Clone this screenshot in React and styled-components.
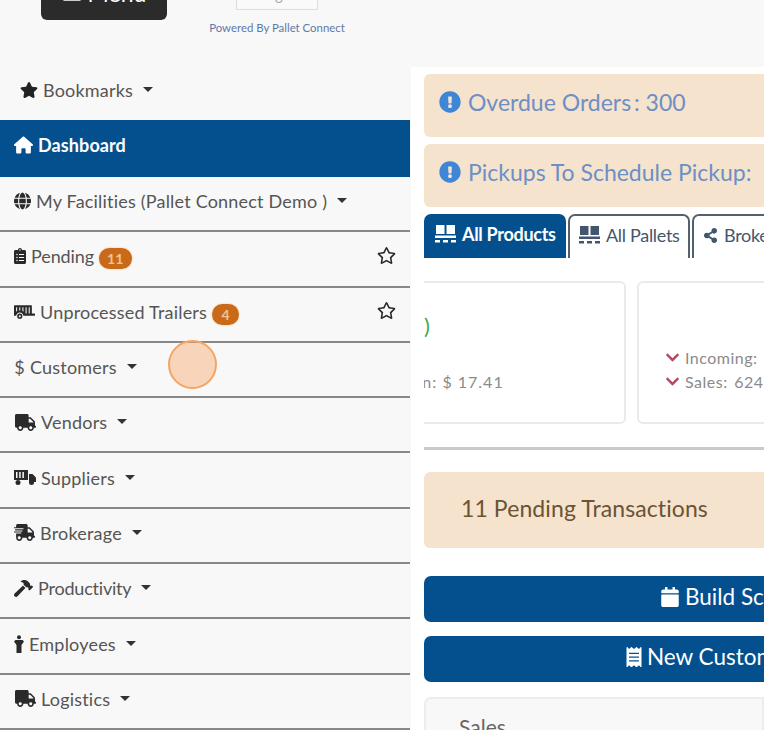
import styled, { createGlobalStyle } from "styled-components";
import {
    FaStar, FaRegStar, FaGlobe, FaClipboardList, FaTrailer, FaTruck,
    FaShippingFast, FaHammer, FaExclamationCircle, FaShareAlt,
    FaCalendar, FaReceipt, FaChevronDown, FaBars,
} from "react-icons/fa";
import { FaHouse } from "react-icons/fa6";

const GlobalStyle = createGlobalStyle`
    html, body {
        margin: 0;
        height: 730px;
        overflow: hidden;
        background: #f8f8f8;
        font-family: Lato, "Liberation Sans", sans-serif;
    }
`

const Page = styled.div`
    position: relative;
    width: 764px;
    height: 730px;
    overflow: hidden;
    color: #555;
`

const TopBar = styled.header`
    display: flex;
    height: 67px;
    padding-left: 41px;
    gap: 40px;
`

const MenuButton = styled.button`
    display: flex;
    align-items: center;
    justify-content: center;
    gap: 6px;
    width: 126px;
    height: 44px;
    margin-top: -24px;
    padding: 0 0 11px;
    border: 0;
    border-radius: 6px;
    background: #2b2b2b;
    color: #fff;
    font: 400 23px Lato, sans-serif;
`

const Brand = styled.div`
    display: flex;
    flex-direction: column;
    align-items: center;
    width: 140px;
`

const LogoBox = styled.div`
    width: 80px;
    height: 30px;
    margin-top: -22px;
    border: 1px solid #ddd;
    background: #fafafa;
    color: #aaa;
    font-size: 15px;
    letter-spacing: 1px;
    line-height: 30px;
    text-align: center;
    overflow: hidden;
`

const Powered = styled.div`
    margin-top: 11px;
    color: #5f78a8;
    font-size: 11.4px;
    white-space: nowrap;
`

const Body = styled.div`
    display: flex;
    align-items: flex-start;
`

const Sidebar = styled.nav`
    flex: none;
    width: 410px;
`

const BookmarkRow = styled.div`
    box-sizing: border-box;
    display: flex;
    align-items: center;
    gap: 5px;
    height: 53px;
    padding: 0 0 8px 20px;
    font-size: 18px;
    letter-spacing: 0.2px;
    color: #555;
    svg { color: #222; }
`

const Row = styled.div`
    box-sizing: border-box;
    display: flex;
    align-items: center;
    gap: 5px;
    height: 55.3px;
    padding: 0 14px 5px;
    border-bottom: 2px solid #888;
    font-size: 18px;
    letter-spacing: 0.2px;
    color: #555;
    svg { color: #2a2a2a; }
`

const ActiveRow = styled(Row)`
    height: 57px;
    padding-bottom: 8px;
    border-bottom: 0;
    background: #04508f;
    color: #fff;
    font-weight: 700;
    letter-spacing: 0.1px;
    svg { color: #fff; }
`

// icon widths differ, so each one sits in a slot of its own width
const IconSlot = styled.span`
    flex: none;
    display: flex;
    justify-content: center;
    width: ${(props) => props.$width}px;
`

const Label = styled.span`
    letter-spacing: ${(props) => props.$spacing ?? 0.2}px;
`

const Caret = styled.span`
    width: 0;
    height: 0;
    margin-left: 5px;
    margin-top: -1px;
    border-left: 5.5px solid transparent;
    border-right: 5.5px solid transparent;
    border-top: 5px solid #333;
`

const Badge = styled.span`
    box-sizing: border-box;
    min-width: 27px;
    height: 21px;
    margin-top: 5px;
    padding: 0 8px;
    border-radius: 11px;
    background: #c96a1b;
    box-shadow: 0 0 2px #f5b46f;
    color: #f3c28f;
    font-size: 14px;
    font-weight: 700;
    line-height: 21px;
    text-align: center;
`

const FavStar = styled(FaRegStar)`
    margin-left: auto;
    margin-top: -2px;
`

const Main = styled.main`
    flex: 1;
    min-width: 0;
    margin-left: 1px;
    padding: 7px 0 0 13px;
    background: #fff;
    overflow: hidden;
`

const Alert = styled.div`
    box-sizing: border-box;
    display: flex;
    align-items: center;
    gap: 7px;
    height: 63px;
    margin-bottom: 7px;
    padding: 0 0 8px 15px;
    border-radius: 6px 0 0 6px;
    background: #f5e3cd;
    color: #6d8fc4;
    font-size: 23px;
    white-space: nowrap;
    svg { color: #3f86d6; flex: none; }
`

const Tabs = styled.div`
    display: flex;
    gap: 2px;
    height: 44px;
    white-space: nowrap;
`

const Tab = styled.div`
    box-sizing: border-box;
    display: flex;
    align-items: center;
    gap: 6px;
    flex: none;
    width: ${(props) => props.$width}px;
    padding: 0 0 4px 9px;
    border-radius: 7px 7px 0 0;
    border: 2px solid #54606c;
    border-bottom: 0;
    background: #fff;
    color: #44566e;
    font-size: 18px;
    letter-spacing: -0.3px;
`

const ActiveTab = styled(Tab)`
    padding-left: 11px;
    border: 0;
    background: #04508f;
    color: #fff;
    font-weight: 700;
`

const Cards = styled.div`
    display: flex;
    gap: 11px;
    margin-top: 23px;
    overflow: hidden;
`

const Card = styled.div`
    box-sizing: border-box;
    flex: none;
    width: 300px;
    height: 143px;
    border: 2px solid #eaeaea;
    border-radius: 6px;
    background: #fff;
    color: #8a8a8a;
    font-size: 16px;
`

const FirstCard = styled(Card)`
    margin-left: -98px;
    padding: 31px 0 0 49px;
`

const SecondCard = styled(Card)`
    padding: 62px 0 0 26px;
`

const Paren = styled.div`
    padding-left: 47px;
    color: #4aa64a;
    font-size: 22px;
    line-height: 24px;
`

const MarginText = styled.div`
    margin-top: 34px;
    letter-spacing: 1px;
    white-space: nowrap;
`

const Stat = styled.div`
    display: flex;
    align-items: center;
    gap: 5px;
    height: 24px;
    letter-spacing: 0.5px;
    word-spacing: 2px;
    white-space: nowrap;
    svg { color: #b5475f; }
`

const Scrollbar = styled.div`
    height: 3px;
    margin-top: 23px;
    background: #c9c9c9;
`

const PendingAlert = styled(Alert)`
    height: 76px;
    margin: 22px 0 28px;
    padding: 0 0 4px 37px;
    color: #6b5335;
    letter-spacing: 0.1px;
`

const ActionButton = styled.div`
    box-sizing: border-box;
    display: flex;
    align-items: center;
    gap: ${(props) => props.$gap}px;
    width: 540px;
    height: 46px;
    margin-bottom: 14px;
    padding: 0 0 5px ${(props) => props.$pad}px;
    border-radius: 7px 0 0 7px;
    background: #04508f;
    color: #fff;
    font-size: 22.5px;
    white-space: nowrap;
`

const SalesCard = styled.div`
    box-sizing: border-box;
    height: 80px;
    margin-top: 15px;
    padding: 15px 0 0 33px;
    border: 2px solid #ececec;
    border-radius: 7px 0 0 0;
    background: #f8f8f8;
    color: #666;
    font-size: 21px;
`

const ClickMarker = styled.div`
    position: absolute;
    left: 168px;
    top: 340px;
    box-sizing: border-box;
    width: 49px;
    height: 49px;
    border: 2px solid #f5a563;
    border-radius: 50%;
    background: rgba(247, 165, 100, 0.42);
`

function PalletIcon() {
    return (
        <svg width="21" height="20" viewBox="0 0 21 20" fill="currentColor">
            <rect x="1" y="1" width="8.5" height="9" />
            <rect x="11.5" y="1" width="8.5" height="9" />
            <rect x="0" y="11.5" width="21" height="2.5" />
            <rect x="0" y="16" width="5" height="2.5" />
            <rect x="8" y="16" width="5" height="2.5" />
            <rect x="16" y="16" width="5" height="2.5" />
        </svg>
    );
}

function PersonIcon() {
    return (
        <svg width="10" height="18" viewBox="0 0 10 18" fill="currentColor">
            <circle cx="5" cy="2.2" r="2" />
            <path d="M1.5 5h7L10 6.5 7.5 10v8h-5v-8L0 6.5z" />
        </svg>
    );
}

function SupplierIcon() {
    return (
        <svg width="22" height="17" viewBox="0 0 22 17" fill="currentColor">
            <path d="M0 1h14v10H0zM2 3v6h1.5V3zm3.2 0v6h1.5V3zm3.2 0v6h1.5V3z" fillRule="evenodd" />
            <path d="M15 5h3.5l3.5 3.5V13h-7z" />
            <circle cx="4" cy="13.5" r="2.5" />
            <circle cx="17.5" cy="13.5" r="2.5" />
        </svg>
    );
}

const menu = [
    { label: "My Facilities (Pallet Connect Demo )", icon: <FaGlobe size={18} />, width: 17, caret: true },
    { label: "Pending", icon: <FaClipboardList size={16} />, width: 12, badge: "11", fav: true, spacing: -0.1 },
    { label: "Unprocessed Trailers", icon: <FaTrailer size={21} />, width: 21, badge: "4", fav: true },
    { label: "Customers", icon: <span>$</span>, width: 11, caret: true },
    { label: "Vendors", icon: <FaTruck size={21} />, width: 22, caret: true },
    { label: "Suppliers", icon: <SupplierIcon />, width: 22, caret: true },
    { label: "Brokerage", icon: <FaShippingFast size={21} />, width: 21, caret: true },
    { label: "Productivity", icon: <FaHammer size={19} />, width: 19, caret: true, spacing: -0.2 },
    { label: "Employees", icon: <PersonIcon />, width: 10, caret: true },
    { label: "Logistics", icon: <FaTruck size={21} />, width: 22, caret: true },
];

function App() {
    return (
        <Page>
            <GlobalStyle />
            <TopBar>
                <MenuButton><FaBars size={20} /> Menu</MenuButton>
                <Brand>
                    <LogoBox>logo</LogoBox>
                    <Powered>Powered By Pallet Connect</Powered>
                </Brand>
            </TopBar>
            <Body>
                <Sidebar>
                    <BookmarkRow><FaStar size={18} /> Bookmarks <Caret /></BookmarkRow>
                    <ActiveRow><IconSlot $width={19}><FaHouse size={20} /></IconSlot> Dashboard</ActiveRow>
                    {menu.map((item) => (
                        <Row key={item.label}>
                            <IconSlot $width={item.width}>{item.icon}</IconSlot>
                            <Label $spacing={item.spacing}>{item.label}</Label>
                            {item.badge && <Badge>{item.badge}</Badge>}
                            {item.caret && <Caret />}
                            {item.fav && <FavStar size={19} />}
                        </Row>
                    ))}
                </Sidebar>
                <Main>
                    <Alert><FaExclamationCircle size={22} /> Overdue Orders{"\u200a\u200a"}: 300</Alert>
                    <Alert><FaExclamationCircle size={22} /> Pickups To Schedule Pickup:</Alert>
                    <Tabs>
                        <ActiveTab $width={142}><PalletIcon /> All Products</ActiveTab>
                        <Tab $width={122}><PalletIcon /> All Pallets</Tab>
                        <Tab $width={140}><FaShareAlt size={15} /> Brokerage</Tab>
                    </Tabs>
                    <Cards>
                        <FirstCard>
                            <Paren>)</Paren>
                            <MarginText>Margin: $ 17.41</MarginText>
                        </FirstCard>
                        <SecondCard>
                            <Stat><FaChevronDown size={15} /> Incoming: 9</Stat>
                            <Stat><FaChevronDown size={15} /> Sales: 624</Stat>
                        </SecondCard>
                    </Cards>
                    <Scrollbar />
                    <PendingAlert>11 Pending Transactions</PendingAlert>
                    <ActionButton $pad={236} $gap={5}><FaCalendar size={20} /> Build Schedule</ActionButton>
                    <ActionButton $pad={200} $gap={3}><FaReceipt size={20} /> New Customer Order</ActionButton>
                    <SalesCard>Sales</SalesCard>
                </Main>
            </Body>
            <ClickMarker />
        </Page>
    );
}

export default App;
